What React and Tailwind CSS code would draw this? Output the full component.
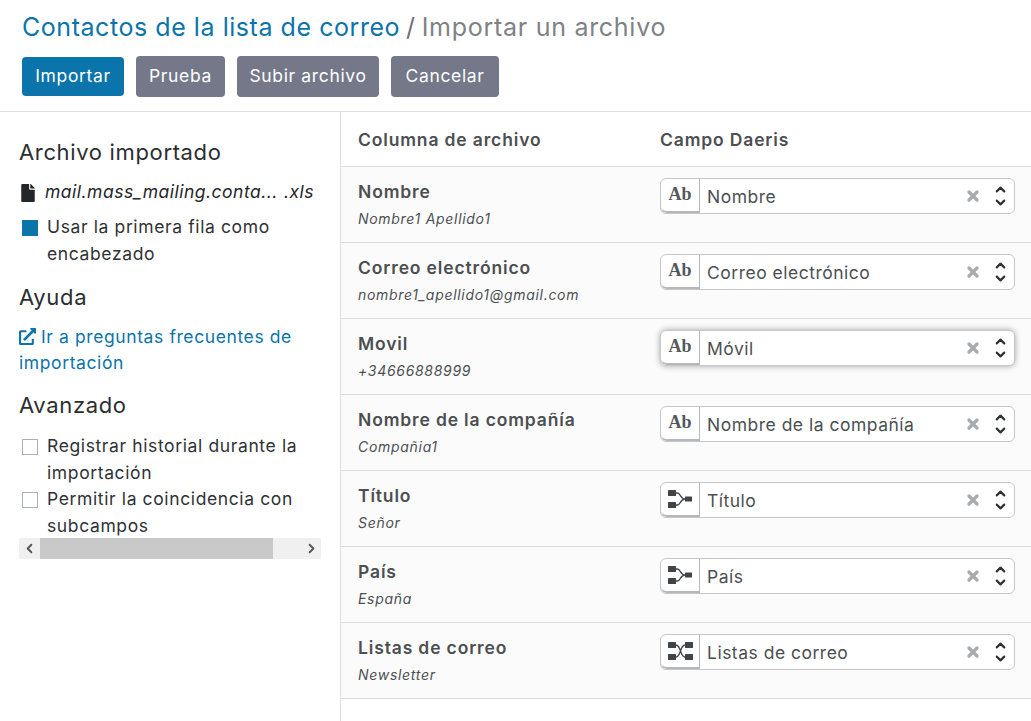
import { FaFile, FaExternalLinkAlt } from 'react-icons/fa'
import { ChevronLeft, ChevronRight, ChevronUp, ChevronDown, X } from 'lucide-react'

const rows = [
  { name: 'Nombre', sample: 'Nombre1 Apellido1', field: 'Nombre', icon: 'text' },
  { name: 'Correo electrónico', sample: 'nombre1_apellido1@gmail.com', field: 'Correo electrónico', icon: 'text' },
  { name: 'Movil', sample: '+34666888999', field: 'Móvil', icon: 'text', focus: true },
  { name: 'Nombre de la compañía', sample: 'Compañia1', field: 'Nombre de la compañía', icon: 'text' },
  { name: 'Título', sample: 'Señor', field: 'Título', icon: 'one' },
  { name: 'País', sample: 'España', field: 'País', icon: 'one' },
  { name: 'Listas de correo', sample: 'Newsletter', field: 'Listas de correo', icon: 'many' },
]

const ManyToOne = () => (
  <svg width="24" height="18" viewBox="0 0 24 18" className="text-[#3f4448]">
    <rect x="0" y="0" width="8" height="6" rx="0.5" fill="currentColor" />
    <rect x="0" y="12" width="8" height="6" rx="0.5" fill="currentColor" />
    <rect x="17" y="6.5" width="7" height="5" rx="0.5" fill="currentColor" />
    <path d="M8 3h1.5c3 0 3 6 7.5 6M8 15h1.5c3 0 3-6 7.5-6" fill="none" stroke="currentColor" strokeWidth="1.3" />
  </svg>
)

const ManyToMany = () => (
  <svg width="25" height="18" viewBox="0 0 25 18" className="text-[#3f4448]">
    <rect x="0" y="0" width="8" height="6" rx="0.5" fill="currentColor" />
    <rect x="0" y="12" width="8" height="6" rx="0.5" fill="currentColor" />
    <rect x="17" y="0" width="8" height="6" rx="0.5" fill="currentColor" />
    <rect x="17" y="12" width="8" height="6" rx="0.5" fill="currentColor" />
    <path d="M8 3c5 0 4 12 9 12M8 15c5 0 4-12 9-12" fill="none" stroke="currentColor" strokeWidth="1.3" />
  </svg>
)

const FieldIcon = ({ kind }) => {
  if (kind === 'one') return <ManyToOne />
  if (kind === 'many') return <ManyToMany />
  return <span className="font-['Liberation_Serif',serif] font-bold text-[18px] text-[#54585c] leading-none -mt-[2px]">Ab</span>
}

const FieldSelect = ({ row }) => (
  <div className={`w-[355px] h-9 flex items-stretch bg-white border border-[#c4c7ca] rounded-md ${row.focus ? 'shadow-[0_0_6px_rgba(0,0,0,0.35)]' : ''}`}>
    <div className="w-[39px] shrink-0 flex items-center justify-center border-r border-[#b5b8bb] border-b-2 rounded-l-md">
      <FieldIcon kind={row.icon} />
    </div>
    <div className="flex-1 pl-[7px] pt-[2px] flex items-center text-[17.5px] tracking-[0.5px] text-[#4c4f52]">{row.field}</div>
    <div className="w-[17px] flex items-center justify-center mr-[11px]">
      <X size={16} strokeWidth={5} className="text-[#a9acaf]" />
    </div>
    <div className="w-[17px] flex flex-col items-center justify-center mr-[5px] text-[#2f3336]">
      <ChevronUp size={15} strokeWidth={3.5} className="-mb-[1px]" />
      <ChevronDown size={15} strokeWidth={3.5} className="-mt-[1px]" />
    </div>
  </div>
)

const Check = ({ checked, children }) => (
  <div className="flex text-[17.5px] tracking-[0.62px] leading-[26.5px] text-[#2f3236]">
    <span className={`w-4 h-4 mt-[6px] ml-[3px] mr-[9px] shrink-0 ${checked ? 'bg-[#0b74aa]' : 'bg-white border border-[#a8b0b8]'}`} />
    <span>{children}</span>
  </div>
)

const Btn = ({ primary, className, children }) => (
  <button className={`rounded text-white text-[17.5px] tracking-[0.65px] ${primary ? 'bg-[#0b74aa] h-[39px]' : 'bg-[#747889] h-[41px]'} ${className}`}>{children}</button>
)

export default function App() {
  return (
    <div className="w-[1031px] h-[721px] overflow-hidden bg-white flex flex-col font-['Inter',sans-serif]">
      <div className="h-[112px] shrink-0 border-b border-[#dcdedf] pl-[22px] pt-[9px]">
        <h1 className="text-[25px] leading-[36px] tracking-[0.55px] text-[#7d8286]">
          <span className="text-[#0b74aa]">Contactos de la lista de correo</span>
          <span className="text-[#6b7075] ml-[6px] mr-[6px]">/</span>
          <span className="tracking-[0.72px]">Importar un archivo</span>
        </h1>
        <div className="flex items-center gap-3 mt-[11px]">
          <Btn primary className="w-[102px]">Importar</Btn>
          <Btn className="w-[89px]">Prueba</Btn>
          <Btn className="w-[142px]">Subir archivo</Btn>
          <Btn className="w-[108px]">Cancelar</Btn>
        </div>
      </div>

      <div className="flex flex-1 min-h-0">
        <aside className="w-[341px] shrink-0 border-r border-[#dcdedf] pl-[19px] pr-[19px] pt-[26px]">
          <h2 className="text-[22px] tracking-[0.65px] leading-[28px] text-[#2b2e31]">Archivo importado</h2>
          <div className="flex items-center mt-[13px] h-[27px] text-[17.5px] tracking-[0.5px] italic text-[#23262a] whitespace-nowrap">
            <FaFile size={18} className="mr-[8px] text-[#23262a]" />
            <span>mail.mass_mailing.conta...</span>
            <span className="ml-[6px]">.xls</span>
          </div>
          <div className="mt-[8px]">
            <Check checked>Usar la primera fila como encabezado</Check>
          </div>
          <h2 className="text-[22px] tracking-[0.65px] leading-[28px] text-[#2b2e31] mt-[16px]">Ayuda</h2>
          <a className="block mt-[13px] text-[17.5px] tracking-[0.6px] leading-[26px] text-[#0b74aa]">
            <FaExternalLinkAlt size={17} className="inline mr-[5px] -mt-1" />Ir a preguntas frecuentes de importación
          </a>
          <h2 className="text-[22px] tracking-[0.65px] leading-[28px] text-[#2b2e31] mt-[15px]">Avanzado</h2>
          <div className="mt-[14px]">
            <Check>Registrar historial durante la importación</Check>
            <Check>Permitir la coincidencia con subcampos</Check>
          </div>
          <div className="flex items-center h-[21px] bg-[#f0f0f0] -mt-[1px] text-[#555]">
            <span className="w-[21px] flex justify-center"><ChevronLeft size={15} strokeWidth={3} /></span>
            <span className="w-[233px] h-full bg-[#c9c9c9]" />
            <span className="flex-1 flex justify-end pr-[2px]"><ChevronRight size={15} strokeWidth={3} /></span>
          </div>
        </aside>

        <main className="flex-1 min-w-0">
          <div className="h-[55px] pt-[2px] flex items-center border-b border-[#dcdedf] font-semibold text-[17.5px] tracking-[0.85px] text-[#4c4f52] bg-white">
            <div className="w-[302px] pl-[17px] shrink-0">Columna de archivo</div>
            <div className="pl-[17px]">Campo Daeris</div>
          </div>
          {rows.map(row => (
            <div key={row.name} className="h-[76px] flex border-b border-[#dcdedf] bg-[#fbfbfb]">
              <div className="w-[302px] shrink-0 pl-[17px] pt-[11px]">
                <div className="font-semibold text-[17.5px] tracking-[0.85px] leading-[28px] text-[#4c4f52]">{row.name}</div>
                <div className="italic text-[14px] tracking-[0.7px] leading-[26px] text-[#4c4f52]">{row.sample}</div>
              </div>
              <div className="pl-[17px] pt-[11px]">
                <FieldSelect row={row} />
              </div>
            </div>
          ))}
        </main>
      </div>
    </div>
  )
}
